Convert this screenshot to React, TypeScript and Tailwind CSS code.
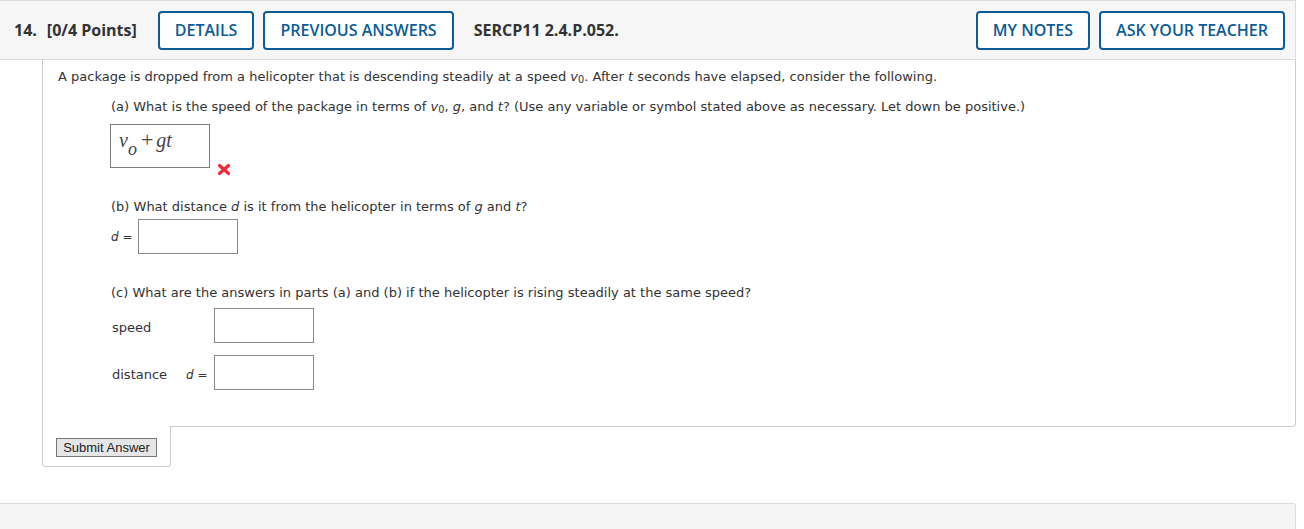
import React from "react";

function HeaderButton({ label }: { label: string }) {
  return (
    <button className="h-[39px] rounded-[4px] border-2 border-[#0b5c98] bg-white px-[15px] font-['Open_Sans',sans-serif] text-[16px] font-semibold text-[#0b5c98]">
      {label}
    </button>
  );
}

function WrongMark() {
  return (
    <svg width="14" height="13" viewBox="0 0 14 13" className="mb-[-8px] ml-[7px]">
      <path d="M2.5 2.5 L11.5 10.5 M11.5 2.5 L2.5 10.5" stroke="#ef2b3c" strokeWidth="3.2" strokeLinecap="round" />
    </svg>
  );
}

function AnswerBox() {
  return <div className="h-[35px] w-[100px] border border-[#8a8a8a] bg-white" />;
}

export default function App() {
  return (
    <div className="w-[1296px] bg-white font-['DejaVu_Sans',sans-serif] text-[13px] leading-[16px] text-[#333]">
      {/* question header */}
      <div className="flex h-[60px] items-center border-t border-r border-b border-[#dcdcdc] bg-[#f6f6f6] pr-[10px] pl-[14px] font-['Open_Sans',sans-serif] text-[#333]">
        <span className="text-[16px] font-bold">14.</span>
        <span className="ml-[10px] text-[16px] font-bold">[0/4 Points]</span>
        <div className="ml-[21px] flex gap-[9px]">
          <HeaderButton label="DETAILS" />
          <HeaderButton label="PREVIOUS ANSWERS" />
        </div>
        <span className="ml-[20px] text-[16px] font-bold">SERCP11 2.4.P.052.</span>
        <div className="ml-auto flex gap-[9px]">
          <HeaderButton label="MY NOTES" />
          <HeaderButton label="ASK YOUR TEACHER" />
        </div>
      </div>

      {/* question body */}
      <div className="ml-[42px] rounded-br-[4px] border-r border-b border-l border-[#cccccc] pt-[9px] pb-[36px] pl-[15px]">
        <p>
          A package is dropped from a helicopter that is descending steadily at a speed <i>v</i>
          <sub className="not-italic">0</sub>. After <i>t</i> seconds have elapsed, consider the following.
        </p>

        <div className="ml-[53px]">
          <p className="mt-[14px]">
            (a) What is the speed of the package in terms of <i>v</i>
            <sub>0</sub>, <i>g</i>, and <i>t</i>? (Use any variable or symbol stated above as necessary. Let down be
            positive.)
          </p>
          <div className="mt-[9px] flex items-end">
            <div className="-ml-px h-[44px] w-[100px] border border-[#808080] bg-white pt-[4px] pl-[8px] font-['Liberation_Serif',serif] text-[20px] leading-[22px] text-[#444]">
              <i>v</i>
              <i className="relative top-[8px] text-[18px]">o</i>
              <span className="ml-[4px] text-[22px]">+</span>
              <i className="ml-[3px]">gt</i>
            </div>
            <WrongMark />
          </div>

          <p className="mt-[31px]">
            (b) What distance <i>d</i> is it from the helicopter in terms of <i>g</i> and <i>t</i>?
          </p>
          <div className="mt-[4px] flex items-center">
            <span className="w-[27px] text-[12px]">
              <i>d</i> =
            </span>
            <AnswerBox />
          </div>

          <p className="mt-[31px]">
            (c) What are the answers in parts (a) and (b) if the helicopter is rising steadily at the same speed?
          </p>
          <div className="mt-[7px] flex items-center">
            <span className="w-[75px] pt-[4px] pl-[1px]">speed</span>
            <span className="w-[28px]" />
            <AnswerBox />
          </div>
          <div className="mt-[12px] flex items-center">
            <span className="w-[75px] pt-[4px] pl-[1px]">distance</span>
            <span className="w-[28px] pt-[4px] text-[12px]">
              <i>d</i> =
            </span>
            <AnswerBox />
          </div>
        </div>
      </div>

      {/* submit tab */}
      <div className="-mt-px ml-[42px] h-[41px] w-[129px] rounded-b-[4px] border-r border-b border-l border-[#cccccc] bg-white pt-[12px] pl-[13px]">
        <button className="h-[19px] w-[101px] border border-[#767676] bg-[#e6e6e6] font-['Liberation_Sans',sans-serif] text-[13px] leading-[17px] text-[#222]">
          Submit Answer
        </button>
      </div>

      {/* next question */}
      <div className="mt-[36px] h-[40px] rounded-tr-[3px] border-t border-r border-[#dcdcdc] bg-[#f5f5f5]" />
    </div>
  );
}
